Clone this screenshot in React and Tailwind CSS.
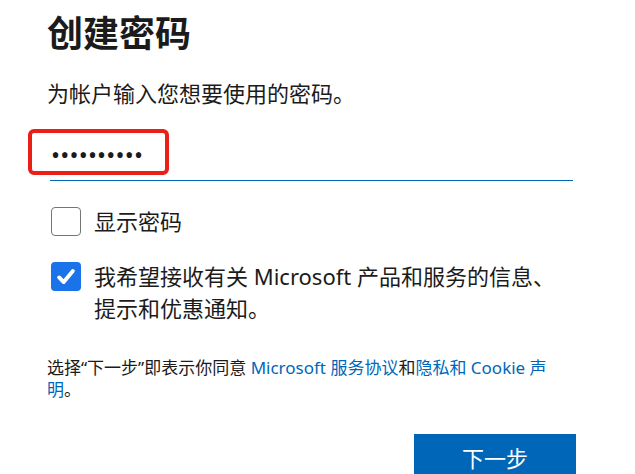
import React from 'react';

const font = { fontFamily: '"Noto Sans", "Noto Sans CJK SC", sans-serif' };

const Checkbox = ({ checked }) =>
  checked ? (
    <span className="flex h-[29px] w-[30px] shrink-0 items-center justify-center rounded-[4px] bg-[#1a73e8]">
      <svg viewBox="0 0 24 24" className="h-[22px] w-[22px]" fill="none">
        <path d="M4.5 12.5l5 5L19.5 5.5" stroke="white" strokeWidth="4.2" strokeLinecap="round" strokeLinejoin="round" />
      </svg>
    </span>
  ) : (
    <span className="block h-[29px] w-[30px] shrink-0 rounded-[4px] border-[1.5px] border-[#767676] bg-white" />
  );

export default function App() {
  return (
    <div
      className="h-[474px] w-[635px] overflow-hidden bg-white pl-[47px] pr-[59px] pt-[12px] text-[#1b1b1b]"
      style={font}
    >
      <h1 className="text-[36px] font-bold leading-[44px]">创建密码</h1>
      <p className="mt-[21px] text-[22px] leading-[32px]">为帐户输入您想要使用的密码。</p>

      <div className="relative ml-[3px] mr-[3px] mt-[32px] h-[40px] border-b border-[#0067b8] pt-[2px]">
        <span className="block pl-[1px] text-[24px] leading-[24px] tracking-[0.2px]">••••••••••</span>
        <div className="absolute left-[-22px] top-[-12px] h-[46px] w-[141px] rounded-[6px] border-4 border-[#ea1f16]" />
      </div>

      <label className="ml-[4px] mt-[24px] flex items-center gap-[13px]">
        <Checkbox />
        <span className="text-[22px] leading-[32px]">显示密码</span>
      </label>

      <label className="ml-[4px] mt-[25px] flex items-start gap-[13px]">
        <Checkbox checked />
        <span className="-mt-[2px] text-[22px] leading-[32px]">
          我希望接收有关 Microsoft 产品和服务的信息、
          <br />
          提示和优惠通知。
        </span>
      </label>

      <p className="mt-[33px] text-[17px] leading-[22px]">
        选择“下一步”即表示你同意 <a className="text-[#0067b8]">Microsoft 服务协议</a>和
        <a className="text-[#0067b8]">隐私和 Cookie 声明</a>。
      </p>

      <div className="mt-[33px] flex justify-end">
        <button className="h-[48px] w-[162px] bg-[#0067b8] text-[22px] text-white">下一步</button>
      </div>
    </div>
  );
}
